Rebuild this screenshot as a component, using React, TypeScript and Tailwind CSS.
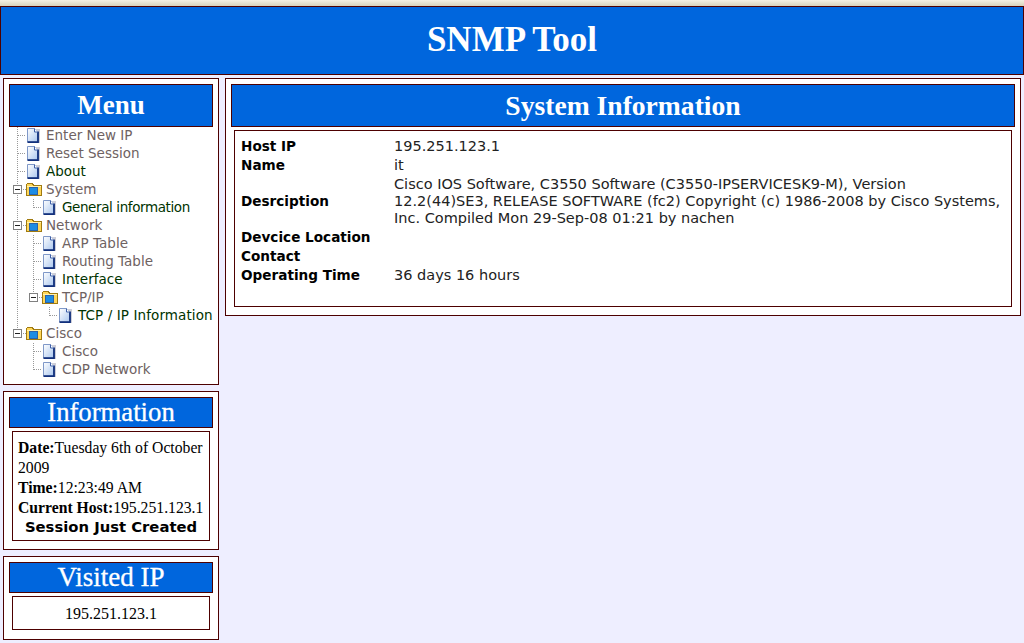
const serif = { fontFamily: '"Liberation Serif", serif' }

const Cell = ({ kind }: { kind: string }) => (
  <svg width="16" height="18" viewBox="0 0 16 18" className="shrink-0" shapeRendering="crispEdges">
    {(kind === 'I' || kind === 'T') && <path d="M7.5 0V18" stroke="#999" strokeDasharray="1 1" />}
    {kind === 'L' && <path d="M7.5 0V9" stroke="#999" strokeDasharray="1 1" />}
    {(kind === 'T' || kind === 'L') && <path d="M8 8.5H16" stroke="#999" strokeDasharray="1 1" />}
    {(kind === 'M' || kind === 'N') && (
      <>
        {kind === 'M' && <path d="M7.5 0V4M7.5 14V18" stroke="#999" strokeDasharray="1 1" />}
        {kind === 'N' && <path d="M7.5 0V4" stroke="#999" strokeDasharray="1 1" />}
        <path d="M13 8.5H16" stroke="#999" strokeDasharray="1 1" />
        <rect x="3.5" y="4.5" width="8" height="8" fill="#fff" stroke="#808080" />
        <path d="M5 8.5H10" stroke="#222" />
      </>
    )}
  </svg>
)

const PageIcon = () => (
  <svg width="16" height="18" viewBox="0 0 16 18" className="shrink-0">
    <defs>
      <linearGradient id="pageFill" x1="0" y1="0" x2="1" y2="1">
        <stop offset="0" stopColor="#ffffff" />
        <stop offset="1" stopColor="#a9c6ee" />
      </linearGradient>
    </defs>
    <path d="M3 2H14V16H3Z" fill="#cfcfd8" />
    <path d="M1.5 1.5H8.5L12 5V15H1.5Z" fill="url(#pageFill)" stroke="#7f98c8" />
    <path d="M12 4.5V15.2H1.5" fill="none" stroke="#12307c" strokeWidth="1.8" />
    <path d="M8.5 1.5V5H12" fill="#fff" stroke="#3f60a8" />
  </svg>
)

const FolderIcon = () => (
  <svg width="16" height="18" viewBox="0 0 16 18" className="shrink-0" shapeRendering="crispEdges">
    <path d="M0.5 14.5V3.5L1.5 2.5H6.5L7.5 4.5H15.5V14.5Z" fill="#ffd75a" stroke="#a07a10" />
    <path d="M1 5H15" stroke="#fff2b0" />
    <rect x="3" y="6" width="8" height="7" fill="#1c8ce4" stroke="#2a62a8" />
  </svg>
)

const treeRows = [
  { cells: ['T'], label: 'Enter New IP' },
  { cells: ['T'], label: 'Reset Session' },
  { cells: ['T'], label: 'About', visited: true },
  { cells: ['M'], label: 'System', folder: true },
  { cells: ['I', 'L'], label: 'General information', visited: true, tweak: 'tracking-[-0.4px]' },
  { cells: ['M'], label: 'Network', folder: true },
  { cells: ['I', 'T'], label: 'ARP Table' },
  { cells: ['I', 'T'], label: 'Routing Table' },
  { cells: ['I', 'T'], label: 'Interface', visited: true },
  { cells: ['I', 'N'], label: 'TCP/IP', folder: true },
  { cells: ['I', 'B', 'L'], label: 'TCP / IP Information', visited: true, tweak: 'tracking-[0.1px]' },
  { cells: ['N'], label: 'Cisco', folder: true },
  { cells: ['B', 'T'], label: 'Cisco' },
  { cells: ['B', 'L'], label: 'CDP Network' }
]

const Heading = ({ className, children }: { className: string; children: string }) => (
  <div
    className={`flex items-center justify-center border border-[#4d0000] bg-[#0066dd] text-white ${className}`}
    style={serif}
  >
    {children}
  </div>
)

const Panel = ({ className, children }: { className: string; children: React.ReactNode }) => (
  <div className={`border border-[#4d0000] bg-white p-[5px] ${className}`}>{children}</div>
)

const infoRows = [
  { label: 'Host IP', lines: ['195.251.123.1'] },
  { label: 'Name', lines: ['it'] },
  {
    label: 'Desrciption',
    lines: [
      'Cisco IOS Software, C3550 Software (C3550-IPSERVICESK9-M), Version',
      '12.2(44)SE3, RELEASE SOFTWARE (fc2) Copyright (c) 1986-2008 by Cisco Systems,',
      'Inc. Compiled Mon 29-Sep-08 01:21 by nachen'
    ]
  },
  { label: 'Devcice Location', lines: [] },
  { label: 'Contact', lines: [] },
  { label: 'Operating Time', lines: ['36 days 16 hours'] }
]

export default function App() {
  return (
    <div className="h-[643px] w-[1024px] overflow-hidden bg-[#eeeeff]" style={{ fontFamily: '"DejaVu Sans", sans-serif' }}>
      {/* Browser edge */}
      <div className="h-[6px] bg-gradient-to-b from-[#f4f1e4] to-[#d8d4bc]" />

      {/* Header */}
      <div
        className="flex h-[69px] items-center justify-center border border-[#4d0000] bg-[#0066dd] pb-[1px] text-[35px] font-bold text-white"
        style={serif}
      >
        SNMP Tool
      </div>

      <div className="flex gap-[6px] px-[3px] pt-[3px]">
        {/* Sidebar */}
        <div className="flex w-[216px] shrink-0 flex-col gap-[6px]">
          <Panel className="h-[307px]">
            <Heading className="h-[43px] text-[27px] font-bold">Menu</Heading>
            <div className="pl-[1px] text-[13.5px]">
              {treeRows.map((row, i) => (
                <div key={i} className="flex h-[18px] items-center whitespace-nowrap">
                  {row.cells.map((c, j) => (
                    <Cell key={j} kind={c} />
                  ))}
                  {row.folder ? <FolderIcon /> : <PageIcon />}
                  <span className={`ml-[4px] pb-[2px] ${row.visited ? 'text-[#003300]' : 'text-[#6e6262]'} ${row.tweak ?? ''}`}>
                    {row.label}
                  </span>
                </div>
              ))}
            </div>
          </Panel>

          <Panel className="h-[159px]">
            <Heading className="h-[31px] text-[26.7px] [-webkit-text-stroke:0.3px_white]">Information</Heading>
            <div
              className="mx-[3px] mt-[3px] h-[110px] border border-[#4d0000] pl-[5px] pt-[6px] text-[15.7px] leading-[20px] text-black"
              style={serif}
            >
              <div className="whitespace-nowrap">
                <b>Date:</b>Tuesday 6th of October
              </div>
              <div>2009</div>
              <div>
                <b>Time:</b>12:23:49 AM
              </div>
              <div className="whitespace-nowrap">
                <b>Current Host:</b>195.251.123.1
              </div>
              <div className="pr-[5px] text-center text-[14.8px] font-bold leading-[18px]" style={{ fontFamily: '"DejaVu Sans", sans-serif' }}>
                Session Just Created
              </div>
            </div>
          </Panel>

          <Panel className="h-[84px]">
            <Heading className="h-[31px] text-[27px] [-webkit-text-stroke:0.3px_white]">Visited IP</Heading>
            <div
              className="mx-[3px] mt-[3px] flex h-[34px] items-center justify-center border border-[#4d0000] pt-[1px] text-[16px] text-black"
              style={serif}
            >
              195.251.123.1
            </div>
          </Panel>
        </div>

        {/* Main */}
        <Panel className="h-[238px] w-[796px]">
          <Heading className="h-[43px] text-[27.6px] font-bold">System Information</Heading>
          <div className="mx-[3px] mt-[3px] h-[177px] border border-[#4d0000] px-[6px] pt-[6px] text-[14.5px] leading-[17px] text-[#222]">
            {infoRows.map((row) => (
              <div key={row.label} className={`flex min-h-[19px] items-center ${row.lines.length > 1 ? 'py-[1px]' : ''}`}>
                <div className="w-[153px] shrink-0 text-[13.6px] font-bold text-black">{row.label}</div>
                <div className="whitespace-nowrap">
                  {row.lines.map((line) => (
                    <div key={line}>{line}</div>
                  ))}
                </div>
              </div>
            ))}
          </div>
        </Panel>
      </div>
    </div>
  )
}
